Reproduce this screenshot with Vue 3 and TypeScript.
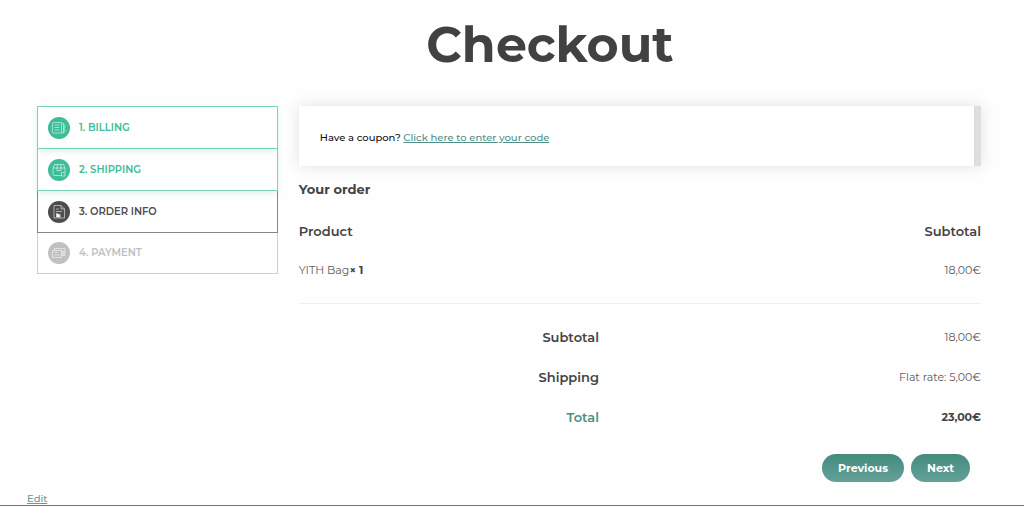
<script setup lang="ts">
type StepState = 'done' | 'current' | 'upcoming'
type StepIcon = 'billing' | 'shipping' | 'order' | 'payment'

interface Step {
  label: string
  icon: StepIcon
  state: StepState
}

interface Total {
  label: string
  value: string
  grand?: boolean
}

const steps: Step[] = [
  { label: '1. BILLING', icon: 'billing', state: 'done' },
  { label: '2. SHIPPING', icon: 'shipping', state: 'done' },
  { label: '3. ORDER INFO', icon: 'order', state: 'current' },
  { label: '4. PAYMENT', icon: 'payment', state: 'upcoming' },
]

const totals: Total[] = [
  { label: 'Subtotal', value: '18,00€' },
  { label: 'Shipping', value: 'Flat rate: 5,00€' },
  { label: 'Total', value: '23,00€', grand: true },
]
</script>

<template>
  <div class="page">
    <h1 class="title">Checkout</h1>

    <div class="layout">
      <nav aria-label="Checkout steps">
        <ol class="steps">
          <li v-for="step in steps" :key="step.icon" class="step" :class="step.state">
            <button type="button" class="step-button" :aria-current="step.state === 'current' ? 'step' : undefined">
              <svg class="step-icon" viewBox="0 0 22 22" aria-hidden="true">
                <circle class="disc" cx="11" cy="11" r="11" />
                <g v-if="step.icon === 'billing'" class="lines">
                  <path d="M13.5 16h-8c-.6 0-1-.4-1-1V6.500c0-.6.4-1 1-1h7c.6 0 1 .4 1 1V16zM6.500 8h5M6.500 10.500h5M6.500 13h5" />
                  <path d="M13.500 5.500l2 1v9.500h-2M15.500 7.500l1.500 1v2l-1.500 1M15.500 11.500l1.500 1v2l-1.500 1" />
                </g>
                <g v-else-if="step.icon === 'shipping'" class="lines">
                  <path d="M13.500 16.500H6c-.6 0-1-.4-1-1V9l1.500-3.500h9L17 9v4M5 9h12M9.500 5.500L9 9v2.500h4V9l-.5-3.500" />
                  <path d="M13.500 13.500H17V17h-3.500z" />
                </g>
                <g v-else-if="step.icon === 'order'" class="lines">
                  <path d="M6 4.500h7l3.500 3.500v9H6zM13 4.500V8h3.500M8 8h3M8 10.500h6" />
                  <path class="solid" d="M8.500 12.500l4 1.500-1.500.8 1.500 1.200h-4z" />
                </g>
                <g v-else class="lines">
                  <path d="M4.500 8.500h9v7h-9zM6.500 8.500v-2h10.500v7h-3.500M13.500 9.500H17M6.500 10.500h3M6.500 13h5" />
                  <circle cx="15" cy="11.500" r="1" />
                </g>
              </svg>
              <span>{{ step.label }}</span>
            </button>
          </li>
        </ol>
      </nav>

      <main>
        <p class="coupon">Have a coupon? <a href="#coupon">Click here to enter your code</a></p>

        <h2 class="heading">Your order</h2>

        <table class="order">
          <thead>
            <tr>
              <th scope="col" class="product">Product</th>
              <th scope="col" class="amount">Subtotal</th>
            </tr>
          </thead>
          <tbody>
            <tr>
              <td class="product">YITH Bag<strong>× 1</strong></td>
              <td class="amount">18,00€</td>
            </tr>
          </tbody>
          <tfoot>
            <tr v-for="total in totals" :key="total.label" :class="{ grand: total.grand }">
              <th scope="row">{{ total.label }}</th>
              <td class="amount">{{ total.value }}</td>
            </tr>
          </tfoot>
        </table>

        <div class="actions">
          <button type="button" class="action">Previous</button>
          <button type="button" class="action">Next</button>
        </div>
      </main>
    </div>

    <footer class="footer"><a href="#edit">Edit</a></footer>
  </div>
</template>

<style>
body {
  background: #fefefe;
}
</style>

<style scoped>
.page {
  box-sizing: border-box;
  display: flex;
  flex-direction: column;
  min-height: 100vh;
  border-bottom: 1px solid #6f7776;
  color: #434343;
  font-family: Montserrat, Inter, "Liberation Sans", sans-serif;
  font-size: 11px;
  line-height: 16px;
}

.title {
  margin: 0;
  padding: 15px 0 31px 76px;
  color: #414141;
  font-size: 49px;
  font-weight: 700;
  line-height: 60px;
  text-align: center;
}

.layout {
  display: grid;
  grid-template-columns: minmax(0, 6fr) minmax(0, 17fr);
  gap: 21px;
  padding: 0 43px 0 37px;
}

.steps {
  margin: 0;
  padding: 0;
  list-style: none;
}

.step {
  position: relative;
  box-sizing: border-box;
  height: 42px;
  border: 1px solid;
  border-top-width: 0;
}

.step:first-child {
  height: 43px;
  border-top-width: 1px;
}

.step:last-child {
  height: 41px;
}

.step.done {
  z-index: 1;
  border-color: #7bd3b9;
  color: #3dbd98;
  box-shadow: 0 2px 6px rgba(61, 189, 152, 0.18);
}

.step.current {
  border-color: #858585;
  color: #4d4d4d;
}

.step.upcoming {
  border-color: #cfcfcf;
  color: #c0c0c0;
}

.step-button {
  display: flex;
  align-items: center;
  gap: 9px;
  width: 100%;
  height: 100%;
  padding: 0 10px;
  border: 0;
  background: transparent;
  color: inherit;
  font: inherit;
  font-size: 10px;
  font-weight: 600;
  text-align: left;
  cursor: pointer;
}

.step-icon {
  width: 22px;
  height: 22px;
  flex: none;
}

.disc {
  fill: currentColor;
}

.lines {
  fill: none;
  stroke: #ffffff;
  stroke-opacity: 0.6;
  stroke-width: 0.9;
  stroke-linejoin: round;
}

.solid {
  fill: #ffffff;
}

.coupon {
  margin: 0;
  padding: 24px 21px 20px;
  border-right: 7px solid #dedede;
  background: #ffffff;
  box-shadow: 0 0 14px rgba(0, 0, 0, 0.12);
  color: #101010;
  font-size: 10px;
  font-weight: 500;
}

.coupon a {
  color: #4d8f84;
}

.heading {
  margin: 15px 0;
  font-size: 13px;
  font-weight: 700;
  line-height: 16px;
}

.order {
  width: 100%;
  border-collapse: collapse;
}

.order th,
.order td {
  height: 40px;
  padding: 0;
  font-weight: 400;
  text-align: right;
}

.order th {
  font-size: 13px;
  font-weight: 600;
}

.order .product {
  width: 44%;
  text-align: left;
}

.order thead th {
  height: 38px;
}

.order tbody td {
  padding-bottom: 13px;
  border-bottom: 1px solid #f0f0f0;
}

.order td {
  color: #5c5c5c;
}

.order strong {
  color: #434343;
  font-weight: 700;
}

.order tfoot tr:first-child > * {
  padding-top: 13px;
}

.order .grand th {
  color: #4a9183;
}

.order .grand td {
  color: #434343;
  font-weight: 700;
}

.actions {
  display: flex;
  justify-content: flex-end;
  gap: 7px;
  padding: 17px 11px 0 0;
}

.action {
  height: 28px;
  padding: 0 16px;
  border: 0;
  border-radius: 14px;
  background: linear-gradient(#438b7e, #64a198);
  color: #ffffff;
  font: inherit;
  font-weight: 700;
  cursor: pointer;
}

.footer {
  margin-top: auto;
  padding: 0 27px;
  font-size: 10px;
  font-weight: 500;
  line-height: 13px;
}

.footer a {
  color: #6a9a92;
}
</style>
